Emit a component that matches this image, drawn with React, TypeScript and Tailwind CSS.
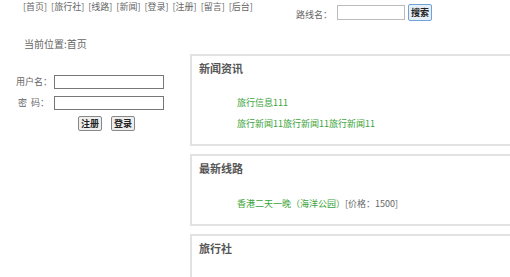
import React from "react";

const navItems = ["首页", "旅行社", "线路", "新闻", "登录", "注册", "留言", "后台"];

const font = {
  fontFamily: '"Noto Sans CJK SC", "Noto Sans", sans-serif',
};

const Panel = ({
  title,
  className,
  children,
}: {
  title: string;
  className: string;
  children?: React.ReactNode;
}) => (
  <div className={`border-2 border-[#e2e2e2] w-[340px] ${className}`}>
    <h3 className="pl-[7px] pt-[4px] text-[11px] font-bold text-[#555] leading-[16px]">
      {title}
    </h3>
    {children}
  </div>
);

export default function App() {
  return (
    <div
      style={font}
      className="w-[510px] h-[277px] overflow-hidden bg-white text-[#666] text-[9px]"
    >
      {/* header */}
      <div className="flex items-start">
        <ul className="flex gap-[4px] pl-[23px] pt-[1px] leading-[12px]">
          {navItems.map((item) => (
            <li key={item}>[{item}]</li>
          ))}
        </ul>
        <div className="flex items-center ml-[43px] pt-[3px]">
          <span className="leading-[12px] mt-[6px]">路线名：</span>
          <input
            type="text"
            className="ml-[5px] w-[68px] h-[15px] border border-[#bbb] bg-white"
          />
          <button className="ml-[3px] h-[17px] px-[2px] border border-[#6fa3d8] bg-[#e6eef7] rounded-[2px] text-[9px] font-bold text-[#222] leading-[13px]">
            搜索
          </button>
        </div>
      </div>

      {/* body */}
      <div className="flex mt-[16px]">
        <div className="w-[190px] shrink-0">
          <p className="pl-[24px] text-[10px] leading-[14px]">当前位置:首页</p>
          <div className="mt-[24px] text-[9px]">
            <div className="flex items-center">
              <label className="w-[54px] text-right pr-[2px]">用户名：</label>
              <input
                type="text"
                className="w-[110px] h-[14px] border border-[#777] bg-white"
              />
            </div>
            <div className="flex items-center mt-[7px]">
              <label className="w-[54px] pl-[18px]">密&nbsp;&nbsp;码：</label>
              <input
                type="text"
                className="w-[110px] h-[14px] border border-[#777] bg-white"
              />
            </div>
            <div className="flex gap-[9px] pl-[78px] mt-[6px]">
              <button className="h-[15px] px-[2px] border border-[#888] bg-[#eee] rounded-[2px] text-[9px] font-semibold text-[#222] leading-[12px]">
                注册
              </button>
              <button className="h-[15px] px-[2px] border border-[#888] bg-[#eee] rounded-[2px] text-[9px] font-semibold text-[#222] leading-[12px]">
                登录
              </button>
            </div>
          </div>
        </div>

        <div className="flex flex-col gap-[8px] mt-[17px]">
          <Panel title="新闻资讯" className="h-[92px]">
            <div className="pl-[45px] pt-[21px] text-[9px] text-[#3aa33a] leading-[12px]">
              <p>旅行信息111</p>
              <p className="mt-[9px]">旅行新闻11旅行新闻11旅行新闻11</p>
            </div>
          </Panel>
          <Panel title="最新线路" className="h-[72px]">
            <div className="pl-[45px] pt-[22px] text-[9px] leading-[12px]">
              <span className="text-[#3aa33a]">香港二天一晚（海洋公园）</span>
              <span>[价格：1500]</span>
            </div>
          </Panel>
          <Panel title="旅行社" className="h-[60px]" />
        </div>
      </div>
    </div>
  );
}
